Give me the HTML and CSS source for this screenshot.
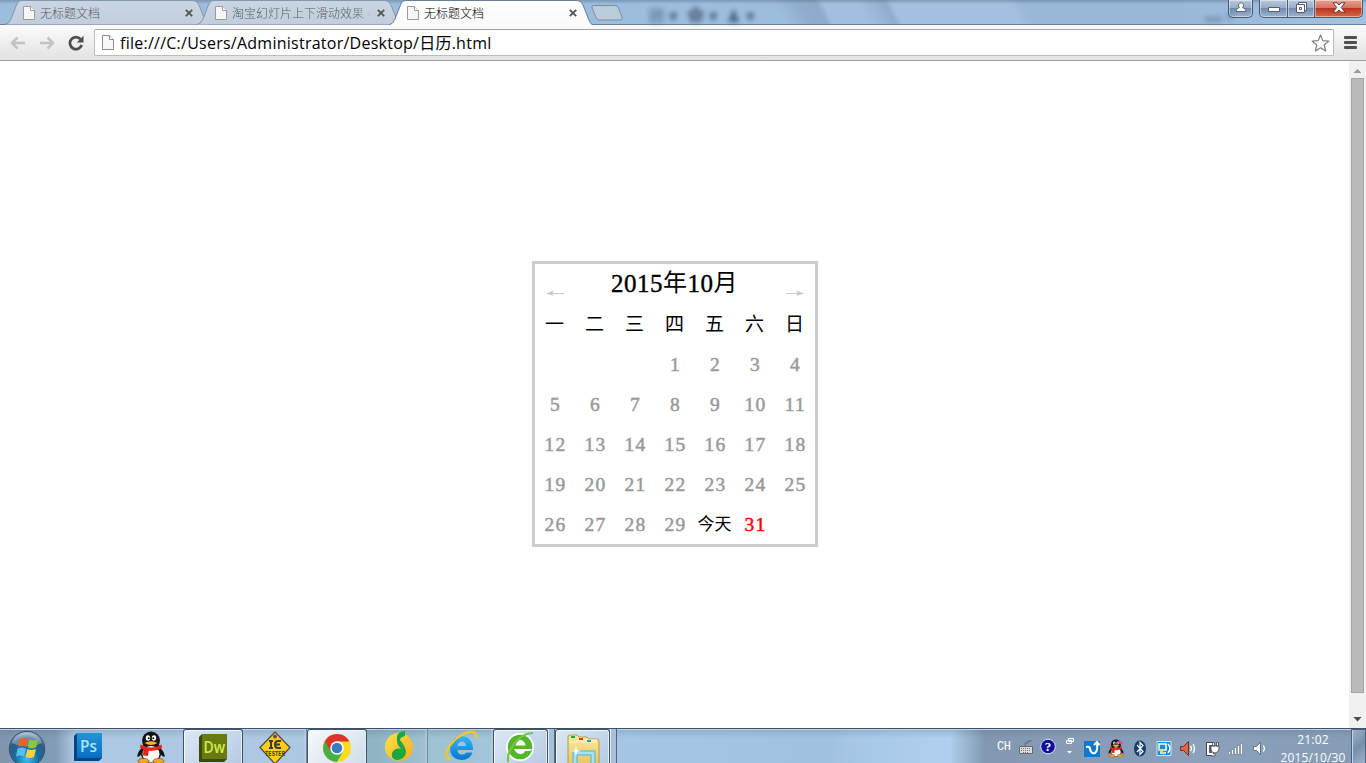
FILE: index.html
```html
<!DOCTYPE html>
<html lang="zh">
<head>
<meta charset="utf-8">
<title>无标题文档</title>
<link rel="stylesheet" href="styles.css">
</head>
<body>
<svg class="defs" width="0" height="0">
  <defs>
    <linearGradient id="tabOff" x2="0" y2="1"><stop offset="0" stop-color="#cbd6e3"/><stop offset="1" stop-color="#c2cddd"/></linearGradient>
    <linearGradient id="tabOn" x2="0" y2="1"><stop offset="0" stop-color="#fff"/><stop offset="1" stop-color="#f9f9f9"/></linearGradient>
    <linearGradient id="gold" x2="1" y2="1"><stop offset="0" stop-color="#ffe04a"/><stop offset="1" stop-color="#f6ae1b"/></linearGradient>
    <linearGradient id="blue" x2="0" y2="1"><stop offset="0" stop-color="#38b3f1"/><stop offset="1" stop-color="#0878cf"/></linearGradient>
    <radialGradient id="orb" cx=".5" cy=".8" r=".75"><stop offset="0" stop-color="#39c3ec"/><stop offset=".45" stop-color="#176ba2"/><stop offset=".8" stop-color="#315b80"/><stop offset="1" stop-color="#8ba9c0"/></radialGradient>
    <linearGradient id="folder" x2="0" y2="1"><stop offset="0" stop-color="#faeaa0"/><stop offset="1" stop-color="#e5c65e"/></linearGradient>
    <symbol id="page" viewBox="0 0 12 14"><path d="M.5.5h7l4 4v9H.5z" fill="#f6f6f6" stroke="#9a9a9a"/><path d="M7.5.5v4h4" fill="#fff" stroke="#9a9a9a"/></symbol>
    <symbol id="close" viewBox="0 0 8 8"><path d="M.8.8l6.4 6.4M7.2.8L.8 7.2" stroke="#555" stroke-width="1.9"/></symbol>
    <symbol id="penguin" viewBox="0 0 30 33">
      <path d="M6 17Q1 21 1.500 26q2 0 4-3M24 17q5 4 4.500 9-2 0-4-3" fill="#111"/>
      <ellipse cx="15" cy="21" rx="10.500" ry="10.500" fill="#151515"/><ellipse cx="15" cy="9.500" rx="9" ry="9" fill="#151515"/>
      <ellipse cx="15" cy="23" rx="8.500" ry="8" fill="#fff"/>
      <ellipse cx="7.500" cy="30" rx="5.500" ry="2.600" fill="#f7a51b" stroke="#6b3b05" stroke-width=".6"/><ellipse cx="22.500" cy="30" rx="5.500" ry="2.600" fill="#f7a51b" stroke="#6b3b05" stroke-width=".6"/>
      <ellipse cx="12" cy="7" rx="2.200" ry="2.700" fill="#fff"/><ellipse cx="18" cy="7" rx="2.200" ry="2.700" fill="#fff"/>
      <circle cx="12.700" cy="7.300" r="1"/><circle cx="17.300" cy="7.300" r="1"/>
      <path d="M8.500 12q6.500-3.500 13 0-6.500 4-13 0" fill="#fbb526"/>
      <path d="M4.500 13.500q10.500 6 21 0l.5 3.500q-10 6-22 0zM7.500 17l5.500 1-1 7-5-.5z" fill="#e6251b"/>
    </symbol>
  </defs>
</svg>

<header class="titlebar">
  <div class="reflection r1">▦ ▾&nbsp; ✿ ▾&nbsp; ♟ ▾</div>
  <div class="reflection r2">▬ ▾</div>
  <div class="tabs">
    <div class="tab"><svg class="tab-shape" viewBox="0 0 204 25"><path d="M0 24.500Q4 24 6 19L11.500 5Q13 .5 17 .5H188Q192 .5 194 5L199.500 19Q201 24 204 24.500" fill="url(#tabOff)" stroke="#8296ae"/></svg><svg class="page-icon"><use href="#page"/></svg><span class="tab-title">无标题文档</span><svg class="close"><use href="#close"/></svg></div>
    <div class="tab"><svg class="tab-shape" viewBox="0 0 204 25"><path d="M0 24.500Q4 24 6 19L11.500 5Q13 .5 17 .5H188Q192 .5 194 5L199.500 19Q201 24 204 24.500" fill="url(#tabOff)" stroke="#8296ae"/></svg><svg class="page-icon"><use href="#page"/></svg><span class="tab-title fade">淘宝幻灯片上下滑动效果 -</span><svg class="close"><use href="#close"/></svg></div>
    <div class="tab active"><svg class="tab-shape" viewBox="0 0 204 25"><path d="M0 25Q4 24 6 19L11.500 5Q13 .5 17 .5H188Q192 .5 194 5L199.500 19Q201 24 204 25" fill="url(#tabOn)" stroke="#667f9a"/></svg><svg class="page-icon"><use href="#page"/></svg><span class="tab-title">无标题文档</span><svg class="close"><use href="#close"/></svg></div>
    <svg class="new-tab" viewBox="0 0 32 16"><path d="M2.500.5h22q2 0 3 2.500l3.500 9q1 3-1.500 3H8q-2 0-3-2.500L1 3Q.3.500 2.500.500z" fill="#bccbda" stroke="#7b8da3"/></svg>
  </div>
  <div class="window-buttons">
    <div class="wb user"><svg width="12" height="11" viewBox="0 0 12 11"><path d="M6 .8a2.600 2.600 0 0 1 1.500 4.700Q11 6 11 9.500H1Q1 6 4.500 5.500A2.600 2.600 0 0 1 6 .8z" fill="#fff" stroke="#59677b"/></svg></div>
    <div class="wb min"><svg width="14" height="12" viewBox="0 0 14 12"><path d="M1.500 5.500h11v4h-11z" fill="#fff" stroke="#535c72"/></svg></div>
    <div class="wb max"><svg width="13" height="12" viewBox="0 0 13 12"><path d="M3.500.5h8v8h-8z" fill="#fff" stroke="#535c72"/><path d="M1.500 2.500h8v8h-8zM4.500 5.500h2v2h-2z" fill="#fff" fill-rule="evenodd" stroke="#535c72"/></svg></div>
    <div class="wb quit"><svg width="14" height="11" viewBox="0 0 14 11"><path d="M1 .8h4L7 3l2-2.200h4L9.300 5.500 13 10.200H9L7 8l-2 2.200H1l3.700-4.700z" fill="#fff" stroke="#5a3b47"/></svg></div>
  </div>
</header>

<nav class="toolbar">
  <svg class="nav-arrow" viewBox="0 0 16 14"><path d="M15 7H2M7.500 1.500L2 7l5.500 5.500" fill="none" stroke="#c2c2c2" stroke-width="2.500"/></svg>
  <svg class="nav-arrow" viewBox="0 0 16 14"><path d="M1 7h13M8.500 1.500L14 7l-5.500 5.500" fill="none" stroke="#c2c2c2" stroke-width="2.500"/></svg>
  <svg class="reload" viewBox="0 0 16 16"><path d="M12.500 4.200A6 6 0 1 0 13.700 10" fill="none" stroke="#4d4d4d" stroke-width="2.700"/><path d="M15.500.8V7.500H8.800z" fill="#4d4d4d"/></svg>
  <div class="address">
    <svg class="url-page" viewBox="0 0 12 15"><path d="M.5.500h7l4 4v10H.5z" fill="#f8f8f8" stroke="#8c8c8c"/><path d="M7.500.500v4h4" fill="#fff" stroke="#8c8c8c"/></svg>
    <span class="url">file:///C:/Users/Administrator/Desktop/日历.html</span>
    <svg class="star" viewBox="0 0 19 18"><path d="M9.500 1l2.300 5.700 6.100.4-4.700 3.900 1.500 6-5.200-3.300L4.300 17l1.500-6L1.100 7.100l6.100-.4z" fill="#fff" stroke="#808080" stroke-width="1.200" stroke-linejoin="round"/></svg>
  </div>
  <div class="menu"><i></i><i></i><i></i></div>
</nav>

<main class="view">
  <section class="document">
    <div class="calendar">
      <div class="cal-head">
        <svg class="cal-arrow" viewBox="0 0 20 8"><path d="M3 4.500h16" stroke="#c8c8c8"/><path d="M1 4.500L9 1.500 7 4.500l2 2.500z" fill="#c8c8c8"/></svg>
        <h1>2015<b>年</b>10<b>月</b></h1>
        <svg class="cal-arrow" viewBox="0 0 20 8"><path d="M1 4.500h16" stroke="#c8c8c8"/><path d="M19 4.500L11 1.500l2 3L11 7z" fill="#c8c8c8"/></svg>
      </div>
      <div class="grid week"><span>一</span><span>二</span><span>三</span><span>四</span><span>五</span><span>六</span><span>日</span></div>
      <div class="grid days">
        <span></span><span></span><span></span><span>1</span><span>2</span><span>3</span><span>4</span>
        <span>5</span><span>6</span><span>7</span><span>8</span><span>9</span><span>10</span><span>11</span>
        <span>12</span><span>13</span><span>14</span><span>15</span><span>16</span><span>17</span><span>18</span>
        <span>19</span><span>20</span><span>21</span><span>22</span><span>23</span><span>24</span><span>25</span>
        <span>26</span><span>27</span><span>28</span><span>29</span><span class="today">今天</span><span class="next">31</span><span></span>
      </div>
    </div>
  </section>
  <aside class="scrollbar">
    <svg width="9" height="5"><path d="M.5 5L4.500 1l4 4z" fill="#999"/></svg>
    <div class="thumb"></div>
    <svg width="9" height="5"><path d="M.5 0l4 4.500 4-4.500z" fill="#4b4b4b"/></svg>
  </aside>
</main>

<footer class="taskbar">
  <div class="apps">
    <div class="app start"><svg width="38" height="38" viewBox="0 0 38 38"><circle cx="19" cy="19" r="17.700" fill="url(#orb)" stroke="#315270"/><path d="M4 13a16 16 0 0 1 30 0q-14 7-30 0" fill="#fff" opacity=".3"/><path d="M12 9q4-2 8 0l-1.500 8q-4-2-8.500 0z" fill="#ef6027"/><path d="M21.500 9.500q4 2 8.500 0l-2 8q-4 2-8 0z" fill="#8bc83f"/><path d="M9.500 18.500q4-2 8.500 0l-2 8q-4-2-8 0z" fill="#5bbcf0"/><path d="M19.500 19q4 2 8.500 0l-2 8q-4 2-8.500 0z" fill="#ffd043"/></svg></div>
    <div class="app ps"><svg width="30" height="30" viewBox="0 0 30 30"><path d="M1 4l3-3h25v25l-3 3H1z" fill="#064582"/><path d="M4 1h25v25H4z" fill="url(#blue)"/><path d="M4 1h25v25H4z" fill="#065da8" opacity=".35"/><text x="7" y="19.500" class="logo" textLength="17" lengthAdjust="spacingAndGlyphs" fill="#a9e5ff">Ps</text></svg></div>
    <div class="app qq"><svg width="30" height="33"><use href="#penguin"/></svg></div>
    <div class="app open dw"><svg width="30" height="30" viewBox="0 0 30 30"><path d="M1 4l3-3h25v25l-3 3H1z" fill="#3c4b09"/><path d="M4 1h25v25H4z" fill="#697a13"/><text x="5.500" y="19.500" class="logo" textLength="21.500" lengthAdjust="spacingAndGlyphs" fill="#d0ed4e">Dw</text></svg></div>
    <div class="app group tester"><svg width="34" height="34" viewBox="0 0 34 34"><path d="M17 1l15 15.500L17 33 2 16.500z" fill="#ffcc18" stroke="#4c4b49" stroke-width="1.200" stroke-linejoin="round"/><circle cx="17" cy="5.500" r="1.900" fill="#555"/><path d="M11 10h4M13 10v7M11 17h4M23 10h-3q-3 0-3 3.500t3 3.500h3M17 13.500h5" fill="none" stroke="#393939" stroke-width="2"/><text x="7" y="24.500" textLength="20" lengthAdjust="spacingAndGlyphs" class="tester-text">TESTER</text></svg></div>
    <div class="app open bright"><svg width="30" height="30" viewBox="0 0 30 30"><circle cx="15" cy="15" r="14" fill="#ffda20"/><path d="M15 15L2.900 8A14 14 0 0 0 15 29l6-10.500z" fill="#49ae45"/><path d="M15 15L8.500 18 2.900 8A14 14 0 0 1 27.500 8.500H15z" fill="#df3329"/><circle cx="15" cy="15" r="6.800" fill="#fff"/><circle cx="15" cy="15" r="5.300" fill="#367dc4"/></svg></div>
    <div class="app group music"><svg width="30" height="32" viewBox="0 0 30 32"><circle cx="15" cy="17" r="14" fill="url(#gold)"/><path d="M13 7q0-5 8-6v5q-5 1-5 4 5 6 6 11 0 6-5 8-6 3-9-2-1-6 4-8 3-1 5 0-5-5-4-12" fill="#19a843"/></svg></div>
    <div class="app group ie"><svg width="34" height="32" viewBox="0 0 34 32"><path d="M29 20H13.500q.5 4.500 4.500 4.500 3 0 4.500-2h6Q26 30 17.500 30 6 29 6 18 7 6 18 6q11 1 11 14M13.500 16H22q-.5-4.500-4-4.500-4 0-4.500 4.500" fill="url(#blue)" fill-rule="evenodd"/><path d="M7 29C-3 30 4 12 18 5 27 0 33 1 32 8" fill="none" stroke="#f4c433" stroke-width="2.500"/></svg></div>
    <div class="app open green"><svg width="32" height="32" viewBox="0 0 32 32"><circle cx="15" cy="16" r="14" fill="#fff"/><circle cx="15" cy="16" r="12.300" fill="#53b62d"/><path d="M10.500 14.500q1.500-5.500 5.500-5.500 4 1 4.500 5.500zM9 18h18q-1 2-3 2h-4q-1 3-4.500 3-4 0-6.500-5" fill="#fff"/><path d="M3 31Q2 21 10 12 18 2 28 2" fill="none" stroke="#75c63c" stroke-width="2.200"/></svg></div>
    <i class="stack"></i>
    <div class="app open explorer"><svg width="34" height="33" viewBox="0 0 34 33"><path d="M2 4q0-2 2-2h7l2 2h8l2 2h8q2 0 2 2v25H2z" fill="url(#folder)" stroke="#b99a45"/><path d="M3 9h27M11 7h20" stroke="#fff9ce"/><path d="M5 3h4v2H5z" fill="#1aac37"/><path d="M13 5h4v2h-4z" fill="#dd3922"/><path d="M21 7h4v2h-4z" fill="#2495e1"/><path d="M9 33V20h18v13" fill="none" stroke="#56aecd" stroke-width="5"/><path d="M9 33V20h18v13" fill="none" stroke="#a5e2f3" stroke-width="3"/><path d="M10 13l1 4 4 1-4 1-1 4-1-4-4-1 4-1z" fill="#fff"/></svg></div>
    <i class="stack"></i>
  </div>
  <div class="tray">
    <span class="lang">CH</span>
    <svg viewBox="0 0 20 20"><path d="M3.500 8.500h13v7h-13z" fill="#ddd" stroke="#666"/><path d="M5 10.500h10M5 12.500h10M7 14.500h6" stroke="#777" stroke-dasharray="1 1"/><path d="M9 8V5h3V3h4" fill="none" stroke="#666"/></svg>
    <svg viewBox="0 0 20 20"><circle cx="10" cy="8.500" r="7.300" fill="#10109c" stroke="#dce4f6"/><text x="10" y="13" text-anchor="middle" class="question">?</text></svg>
    <svg viewBox="0 0 20 20"><path d="M8.500 -.5h5v3h-5zM6.500 1.500h5v3h-5z" transform="translate(0 1)" fill="#8da1b8" stroke="#fff"/><path d="M7 13h5l-2.500 2.500z" fill="#fff"/></svg>
    <svg viewBox="0 0 20 20"><path d="M2 3h16v16H2z" fill="#1177c9"/><path d="M4 9q4-1 4 2 1 5 5 4 3-2 2-10M12 7l3-3 2.500 3" fill="none" stroke="#fff" stroke-width="2"/></svg>
    <svg viewBox="-2 -2 34 36"><use href="#penguin" width="30" height="33"/><path d="M17 5l5-4 1 4 5 1-4 4z" fill="#f23791"/></svg>
    <svg viewBox="0 0 20 20"><ellipse cx="10" cy="10.500" rx="6" ry="8" fill="#123f70"/><path d="M7 7l6 6.500-3 3v-12l3 3L7 14" fill="none" stroke="#fff" stroke-width="1.200"/></svg>
    <svg viewBox="0 0 20 20"><path d="M3 3.500h14v14H3z" fill="#178ed8" stroke="#c9e9fa"/><path d="M5 6h7v6H5zM6 15h6M14 6q4 4 0 9" fill="none" stroke="#fff" stroke-width="1.500"/><path d="M5 11l5 5" stroke="#ffd35a" stroke-width="2"/></svg>
    <svg viewBox="0 0 20 20"><path d="M2.500 8.500h3l5-5v14l-5-5h-3z" fill="#e3653f" stroke="#6a3024"/><path d="M12.500 8q2 2.500 0 5M15 6q3 4.500 0 9" fill="none" stroke="#fff" stroke-width="1.300"/></svg>
    <svg viewBox="0 0 20 20"><path d="M4.500 4.500h7v13h-7z" fill="#fff" stroke="#444"/><path d="M7 7h3v8H7z" fill="#53606e"/><path d="M9 8h8v3q-1 4-4 4-4 0-4-4zM10.500 4.500h2V8h-2zM14.500 4.500h2V8h-2zM13 15v3H9" fill="#fff" stroke="#444" stroke-width=".8"/></svg>
    <svg viewBox="0 0 20 20"><path d="M2.500 13.500h2v3h-2zm3-2h2v5h-2zm3-2h2v7h-2zm3-2h2v9h-2zm3-2h2v11h-2z" fill="#fff" stroke="#60758a" stroke-width=".6"/></svg>
    <svg viewBox="0 0 20 20"><path d="M3.500 8.500h3l4-4.500v13l-4-4.500h-3z" fill="#fff" stroke="#64717f"/><path d="M13 7.500q3 3 0 6" fill="none" stroke="#fff" stroke-width="1.400"/></svg>
  </div>
  <div class="clock"><span>21:02</span><span>2015/10/30</span></div>
  <div class="show-desktop"></div>
</footer>
</body>
</html>
```
FILE: styles.css
```css
* { box-sizing: border-box; }
html, body { height: 100%; }
body { margin: 0; display: flex; flex-direction: column; overflow: hidden; background: #fff; font-family: "Open Sans", "Noto Sans CJK SC", sans-serif; }
svg { display: block; flex: none; }
.defs { position: absolute; }

.titlebar { position: relative; display: flex; justify-content: space-between; flex: none; height: 25px; border-bottom: 1px solid #66809f; background: linear-gradient(#59728f80, transparent 4px), linear-gradient(62deg, #9dbddc 0 57%, #8eabc9 59% 60%, #a2bfdd 60.500% 63%, #91adcb 65%, #a3c0de 65.500% 74%, #99b7d6 75% 86%, #a4c3e2); }
.reflection { position: absolute; top: 5px; color: #2b4159; font-size: 17px; line-height: 22px; filter: blur(2.500px); opacity: .75; white-space: nowrap; }
.r1 { left: 648px; }
.r2 { left: 1205px; opacity: .3; }
.tabs { display: flex; padding-left: 5px; }
.tab { position: relative; display: flex; align-items: center; width: 204px; height: 25px; margin-right: -12px; padding-left: 18px; }
.tab-shape { position: absolute; inset: 0; width: 204px; height: 25px; }
.tab > :not(.tab-shape) { position: relative; }
.active { z-index: 1; }
.page-icon { width: 12px; height: 14px; }
.tab-title { width: 142px; margin-left: 5px; color: #555c66; font: 12px/18px "Noto Sans CJK SC", sans-serif; font-weight: 300; white-space: nowrap; }
.active .tab-title { color: #000; }
.fade { -webkit-mask-image: linear-gradient(90deg, #000 120px, transparent 144px); }
.close { width: 8px; height: 8px; margin-left: 3px; }
.new-tab { width: 32px; height: 16px; margin: 5px 0 0 10px; }
.window-buttons { display: flex; height: 18px; padding-right: 3px; }
.wb { display: flex; justify-content: center; align-items: center; height: 18px; border: 1px solid #465b76; border-top: 0; box-shadow: inset 0 0 0 1px #ffffff70; background: linear-gradient(#bac9dc, #94aac5 48%, #718cad 50%, #9db4cf); padding-bottom: 2px; }
.user { width: 25px; margin-right: 6px; border-radius: 0 0 5px 5px; }
.min { width: 29px; border-radius: 0 0 0 5px; }
.max { width: 27px; border-left: 0; }
.quit { width: 48px; border-left: 0; border-radius: 0 0 5px; background: linear-gradient(#e7a392, #d4705c 48%, #bd331f 50%, #d56b45); }

.toolbar { display: flex; align-items: center; flex: none; height: 36px; padding: 0 8px 0 10px; border-bottom: 1px solid #9f9f9f; background: linear-gradient(#fbfbfb, #e2e2e2); }
.nav-arrow { width: 16px; height: 14px; margin-right: 13px; }
.reload { width: 16px; height: 16px; margin-right: 10px; }
.address { display: flex; align-items: center; width: 1240px; height: 27px; padding: 0 3px 0 7px; border: 1px solid #bcbcbc; border-top-color: #a3a3a3; border-radius: 2px; background: #fff; }
.url-page { width: 12px; height: 15px; }
.url { flex: 1; margin-left: 6px; font-family: "Open Sans", "Noto Sans CJK SC", sans-serif; font-size: 16px; line-height: 24px; letter-spacing: .25px; white-space: nowrap; }
.star { width: 19px; height: 18px; }
.menu { display: grid; gap: 2px; width: 13px; margin-left: 10px; }
.menu i { height: 3px; border-radius: 1px; background: #505050; }

.view { display: flex; flex: 1; min-height: 0; }
.document { display: flex; justify-content: center; align-items: flex-start; flex: 1; padding-top: 200px; background: #fff; }
.calendar { width: 286px; height: 286px; border: 3px solid #ccc; font-family: "Liberation Serif", "Noto Sans CJK SC", serif; }
.cal-head { display: flex; justify-content: space-between; height: 40px; padding: 0 10px; }
.cal-arrow { width: 20px; height: 8px; margin-top: 25px; }
h1 { display: flex; margin: 0; font-size: 25px; font-weight: 400; line-height: 40px; letter-spacing: .5px; -webkit-text-stroke: .4px #000; }
h1 b { font-weight: 400; font-size: 24px; line-height: 39px; -webkit-text-stroke: 0; }
.grid { display: grid; grid-template-columns: repeat(7, 40px); grid-auto-rows: 40px; text-align: center; line-height: 40px; }
.week { font-size: 19px; line-height: 42px; font-weight: 400; }
.days { color: #999; font-size: 19.500px; letter-spacing: 1.300px; line-height: 41px; -webkit-text-stroke: .5px currentColor; }
.days span { padding-left: 2px; }
.days .today { padding-left: 0; color: #000; font-size: 17px; line-height: 42px; letter-spacing: 0; -webkit-text-stroke: 0; }
.days .next { color: #f00; }
.scrollbar { display: flex; flex-direction: column; align-items: center; width: 17px; padding: 7px 0 6px; background: #f1f1f1; }
.thumb { width: 13px; height: 615px; margin: 5px 1px auto 0; border: 1px solid #a4a4a4; background: #bababa; }

.taskbar { display: flex; flex: none; height: 35px; overflow: hidden; border-top: 1px solid #3d5066; box-shadow: inset 0 1px #c4d5e6; background: linear-gradient(#3a547033, transparent 9px), linear-gradient(90deg, #8196ad 0, #819bb6 55px, #adc8e3 75px, #adc8e3 300px, #8fb3c3 370px, #9dc2d0 430px, #a7c8e5 550px, #a1c2df 830px, #a9c9e8 870px, #afcfed 950px, #8298b1 985px, #8ba1bb 1200px, #849bb6); }
.apps { display: flex; width: 990px; }
.app { display: flex; justify-content: center; align-items: flex-start; flex: none; width: 60px; height: 35px; padding-top: 3px; }
.start { width: 54px; padding-top: 1px; }
.ps { width: 68px; }
.qq { width: 61px; padding: 2px 3px 0 0; }
.open { border: 1px solid #3e5268; border-bottom: 0; border-radius: 3px 3px 0 0; box-shadow: inset 1px 1px #f0f7fe, inset -1px 0 #e4edf7; background: linear-gradient(135deg, #dce8f4, #b5cbe3); }
.group { border-right: 1px solid #758da4; box-shadow: inset -2px 0 #c3d6e366; }
.tester { width: 64px; padding-top: 2px; }
.bright { background: linear-gradient(135deg, #f6f9fb, #cfdeea); }
.music { width: 61px; padding: 1px 0 0 3px; }
.ie { width: 65px; padding-top: 1px; border-right: 0; }
.green { width: 55px; padding-top: 1px; }
.explorer { width: 55px; padding-top: 3px; }
.stack { width: 7px; border-left: 1px solid #e3eff9; border-right: 1px solid #52687d; background: #a8c0d9; }
.logo { font: 600 17px "Open Sans", sans-serif; }
.tester-text { fill: #393939; font: bold 7px "Liberation Mono", monospace; }
.tray { display: grid; grid-template-columns: 22px repeat(3, 22px) repeat(8, 24px); align-items: start; width: 284px; padding: 9px 0 0 4px; }
.tray svg { width: 20px; height: 20px; }
.lang { padding: 3px 0 0 3px; color: #fff; font: 12px/12px "Liberation Mono", monospace; letter-spacing: -.5px; }
.question { fill: #fff; font: bold 13px "Liberation Serif", serif; }
.clock { display: flex; flex-direction: column; align-items: center; width: 77px; padding: 2px 0 0 1px; color: #fff; font-size: 12px; line-height: 18px; letter-spacing: .15px; }
.show-desktop { width: 15px; border: 1px solid #4d6074; border-bottom: 0; box-shadow: inset 1px 0 #c8d5e1; background: linear-gradient(135deg, #9fb2c6, #7590ad 50%, #9bb1ca); }
```
